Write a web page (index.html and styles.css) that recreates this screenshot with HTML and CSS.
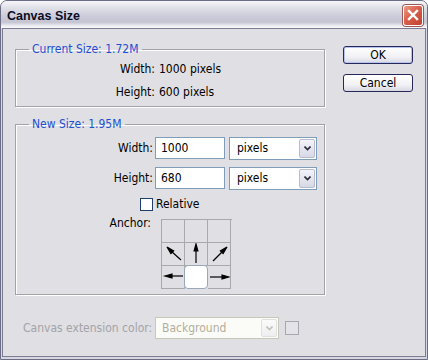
FILE: index.html
```html
<!DOCTYPE html>
<html lang="en">
<head>
    <meta charset="UTF-8">
    <title>Canvas Size</title>
    <link rel="stylesheet" href="styles.css">
</head>
<body>
    <div class="window">
        <div class="titlebar">
            <span class="title">Canvas Size</span>
            <span class="close">
                <svg width="12" height="12" viewBox="0 0 12 12">
                    <path d="M2 2 L10 10 M10 2 L2 10" stroke="#fff" stroke-width="2.4" stroke-linecap="square"/>
                </svg>
            </span>
        </div>
        <div class="client">
            <div class="main">
                <fieldset class="group current">
                    <legend>Current Size: 1.72M</legend>
                    <div class="form">
                        <span class="label">Width:</span><span>1000 pixels</span>
                        <span class="label">Height:</span><span>600 pixels</span>
                    </div>
                </fieldset>

                <fieldset class="group newsize">
                    <legend>New Size: 1.95M</legend>
                    <div class="form">
                        <label class="label" for="w">Width:</label>
                        <div class="field-row">
                            <input class="text" id="w" type="text" value="1000">
                            <div class="combo">
                                <span class="combo-text">pixels</span>
                                <span class="drop"><svg width="7" height="5" viewBox="0 0 7 5"><path d="M0.5 0.5 L3.5 3.5 L6.5 0.5" fill="none" stroke="#2a2a3a" stroke-width="1.6"/></svg></span>
                            </div>
                        </div>

                        <label class="label" for="h">Height:</label>
                        <div class="field-row">
                            <input class="text" id="h" type="text" value="680">
                            <div class="combo">
                                <span class="combo-text">pixels</span>
                                <span class="drop"><svg width="7" height="5" viewBox="0 0 7 5"><path d="M0.5 0.5 L3.5 3.5 L6.5 0.5" fill="none" stroke="#2a2a3a" stroke-width="1.6"/></svg></span>
                            </div>
                        </div>

                        <span class="label"><span class="check"></span></span>
                        <span class="check-text">Relative</span>

                        <span class="label top">Anchor:</span>
                        <div class="anchor">
                            <div class="cell"></div>
                            <div class="cell"></div>
                            <div class="cell"></div>
                            <div class="cell">
                                <svg width="22" height="22" viewBox="0 0 22 22"><line x1="19" y1="17" x2="9" y2="8"/><polygon points="5,4 11.6,7.9 8.9,10.6"/></svg>
                            </div>
                            <div class="cell">
                                <svg width="22" height="22" viewBox="0 0 22 22"><line x1="11" y1="20" x2="11" y2="6"/><polygon points="11,1 9.1,8 12.9,8"/></svg>
                            </div>
                            <div class="cell">
                                <svg width="22" height="22" viewBox="0 0 22 22"><line x1="5" y1="18" x2="15" y2="8"/><polygon points="19,4 15.1,10.6 12.4,7.9"/></svg>
                            </div>
                            <div class="cell">
                                <svg width="22" height="22" viewBox="0 0 22 22"><line x1="21" y1="10" x2="8" y2="10"/><polygon points="3,10 10,8.1 10,11.9"/></svg>
                            </div>
                            <div class="cell selected"></div>
                            <div class="cell">
                                <svg width="22" height="22" viewBox="0 0 22 22"><line x1="2" y1="11" x2="15" y2="11"/><polygon points="21,11 14,9.1 14,12.9"/></svg>
                            </div>
                        </div>
                    </div>
                </fieldset>

                <div class="ext-row">
                    <span class="ext-label">Canvas extension color:</span>
                    <div class="combo disabled">
                        <span class="combo-text">Background</span>
                        <span class="drop"><svg width="7" height="5" viewBox="0 0 7 5"><path d="M0.5 0.5 L3.5 3.5 L6.5 0.5" fill="none" stroke="#c4c2b8" stroke-width="1.6"/></svg></span>
                    </div>
                    <span class="swatch"></span>
                </div>
            </div>

            <div class="buttons">
                <button class="btn default">OK</button>
                <button class="btn">Cancel</button>
            </div>
        </div>
    </div>
</body>
</html>
```

FILE: styles.css
```css
body {
    margin: 0;
    font-family: "DejaVu Sans Condensed", "Liberation Sans", Arial, sans-serif;
    font-size: 12px;
    color: #000;
}

.window {
    width: 428px;
    height: 360px;
    box-sizing: border-box;
    border: 1px solid #6c6c84;
    border-radius: 7px 7px 0 0;
    background: #d6d6e0;
    display: flex;
    flex-direction: column;
    padding: 0 0 1px 0;
}

.titlebar {
    height: 27px;
    display: flex;
    align-items: center;
    justify-content: space-between;
    padding: 2px 4px 0 6px;
    box-sizing: border-box;
    border-radius: 6px 6px 0 0;
    background: linear-gradient(#f6f6f9, #e0e0e8 25%, #cacad8 60%, #c4c4d2 78%, #ececf2 92%, #fafafc);
}

.title {
    font-family: "Liberation Sans", Arial, sans-serif;
    font-weight: bold;
    font-size: 12.5px;
    color: #0c0c24;
}

.close {
    width: 20px;
    height: 21px;
    box-sizing: border-box;
    border: 1px solid #fff;
    border-radius: 3px;
    box-shadow: 0 0 0 1px #9c5a5a;
    background: linear-gradient(135deg, #ec9a88, #d8604a 45%, #c0402e);
    display: flex;
    align-items: center;
    justify-content: center;
    margin-top: -1px;
}

.client {
    flex: 1;
    display: flex;
    margin: 0 1px 1px 1px;
    border: 1px solid #7c7c94;
    background: #e0dfe3;
    padding: 13px 0 0 12px;
}

.main {
    width: 310px;
}

.group {
    margin: 0;
    padding: 0;
    width: 310px;
    box-sizing: border-box;
    border: 1px solid #a2a2a8;
    box-shadow: 1px 1px 0 #fff, inset 1px 1px 0 #fff;
    min-inline-size: 0;
}

.group legend {
    margin-left: 13px;
    padding: 0 3px;
    line-height: 14px;
    color: #1e4fd4;
}

.form {
    display: grid;
    align-items: center;
}

.current .form {
    grid-template-columns: 139px auto;
    column-gap: 4px;
    grid-auto-rows: 23px;
    padding: 1px 0 3px;
}

.label {
    text-align: right;
}

.label.top {
    align-self: start;
    line-height: 14px;
    margin-top: -3px;
    padding-right: 2px;
}

.newsize {
    margin-top: 10px;
}

.newsize .form {
    grid-template-columns: 137px auto;
    grid-template-rows: 22px 22px 14px 70px;
    column-gap: 2px;
    row-gap: 8px;
    padding: 6px 0 5px;
}

.field-row {
    display: flex;
    gap: 4px;
}

.text {
    width: 70px;
    height: 22px;
    box-sizing: border-box;
    border: 1px solid #7f9db9;
    padding: 0 5px;
    font: inherit;
    color: #000;
    background: #fff;
}

.combo {
    width: 88px;
    height: 23px;
    box-sizing: border-box;
    border: 1px solid #7f9db9;
    background: #fff;
    display: flex;
    align-items: stretch;
}

.combo-text {
    flex: 1;
    padding-left: 7px;
    display: flex;
    align-items: center;
}

.drop {
    width: 16px;
    margin: 1px;
    box-sizing: border-box;
    border: 1px solid #b8bcd0;
    border-radius: 2px;
    background: linear-gradient(#f4f4fa, #d6d8e6);
    display: flex;
    align-items: center;
    justify-content: center;
}

.check {
    display: inline-block;
    width: 13px;
    height: 13px;
    box-sizing: border-box;
    border: 1px solid #1c3f6c;
    background: #fff;
    vertical-align: middle;
}

.check-text {
    line-height: 13px;
    padding-left: 1px;
}

.anchor {
    margin-left: 6px;
    display: grid;
    grid-template-columns: repeat(3, 23px);
    grid-template-rows: repeat(3, 23px);
    width: 70px;
    border-left: 1px solid #a9a9ad;
    border-top: 1px solid #a9a9ad;
}

.cell {
    box-sizing: border-box;
    border-right: 1px solid #a9a9ad;
    border-bottom: 1px solid #a9a9ad;
}

.cell svg {
    display: block;
    stroke: #000;
    stroke-width: 1.2;
    fill: #000;
}

.cell.selected {
    background: #fff;
    border: 1px solid #98a8b8;
    border-radius: 4px;
    margin: -1px 0 0 -1px;
    width: 24px;
    height: 24px;
}

.ext-row {
    display: flex;
    align-items: center;
    margin-top: 22px;
    padding-left: 8px;
}

.ext-label {
    color: #a3a3a8;
    width: 132px;
    white-space: nowrap;
}

.combo.disabled {
    width: 124px;
    height: 22px;
    border-color: #c9c7ba;
    background: #fbfbf7;
}

.combo.disabled .combo-text {
    color: #b3ae9c;
    padding-left: 6px;
}

.combo.disabled .drop {
    border-color: #e0e0e0;
    background: linear-gradient(#fbfbfb, #eeeef0);
}

.swatch {
    width: 14px;
    height: 14px;
    box-sizing: border-box;
    margin-left: 6px;
    border: 1px solid #a8a8ae;
    background: #e4e4e8;
}

.buttons {
    margin-left: 18px;
    padding-top: 4px;
    display: flex;
    flex-direction: column;
    gap: 10px;
}

.btn {
    width: 70px;
    height: 18px;
    box-sizing: border-box;
    padding: 0;
    font: inherit;
    line-height: 16px;
    color: #000;
    border: 1px solid #27275a;
    border-radius: 3px;
    background: linear-gradient(#ffffff, #f2f2f6 60%, #d8d8e4);
}

.btn.default {
    box-shadow: inset 0 0 0 1px #b4c4ee;
}
```
